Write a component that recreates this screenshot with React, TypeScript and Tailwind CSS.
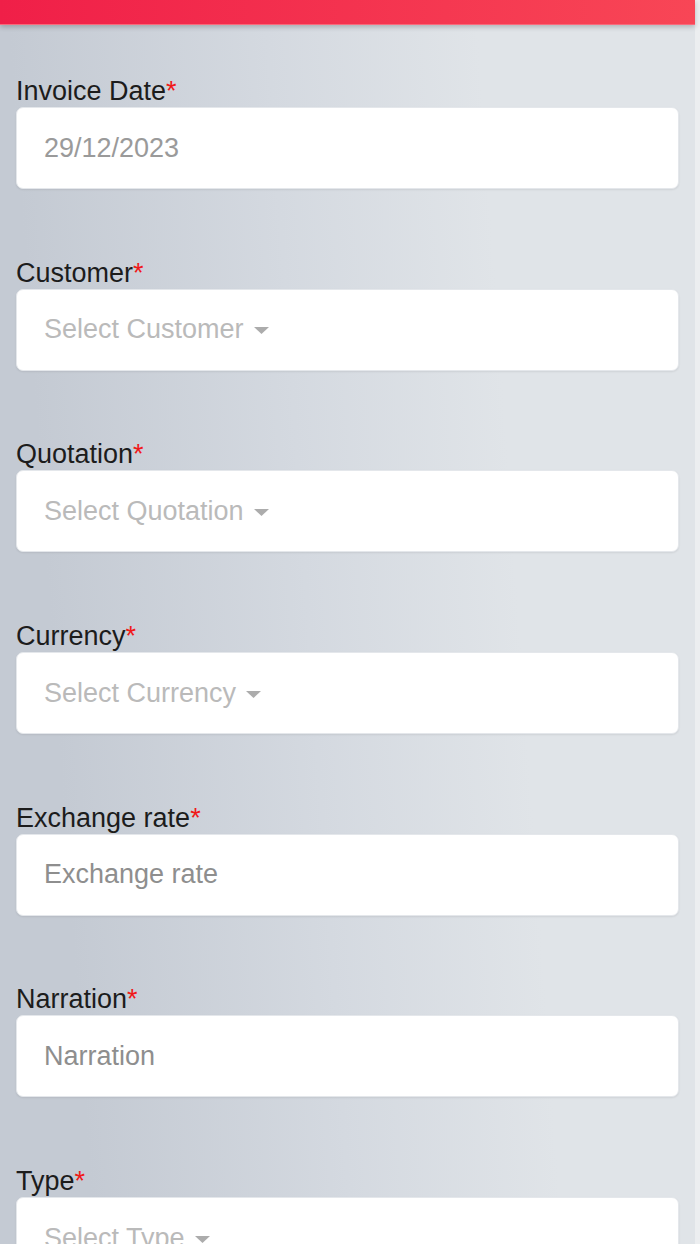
import React from "react";

type Field = { label: string; value: string; kind: "date" | "select" | "text" };

const fields: Field[] = [
  { label: "Invoice Date", value: "29/12/2023", kind: "date" },
  { label: "Customer", value: "Select Customer", kind: "select" },
  { label: "Quotation", value: "Select Quotation", kind: "select" },
  { label: "Currency", value: "Select Currency", kind: "select" },
  { label: "Exchange rate", value: "Exchange rate", kind: "text" },
  { label: "Narration", value: "Narration", kind: "text" },
  { label: "Type", value: "Select Type", kind: "select" },
];

function Caret() {
  return (
    <svg width="15" height="7" viewBox="0 0 15 7" className="ml-[10px] mt-[2px] shrink-0">
      <path d="M0 0 L15 0 L7.5 7 Z" fill="#acacac" />
    </svg>
  );
}

function FieldBlock({ f }: { f: Field }) {
  const color =
    f.kind === "select" ? "text-[#bababa]" : f.kind === "date" ? "text-[#9a9a9a]" : "text-[#8e8e8e]";
  return (
    <div className="flex flex-col">
      <div className="h-[31px] text-[27px] leading-[31px] text-[#1c1c1c]">
        {f.label}
        <span className="text-[#f01818]">*</span>
      </div>
      <div className="flex h-[82px] items-center rounded-[7px] border border-[#e4e7eb] bg-white pl-[27px] shadow-[0_1px_2px_rgba(0,0,0,0.08)]">
        <span className={`text-[27px] leading-[31px] ${color}`}>{f.value}</span>
        {f.kind === "select" && <Caret />}
      </div>
    </div>
  );
}

export default function App() {
  return (
    <div
      className="flex h-[1244px] w-[700px] overflow-hidden"
      style={{ fontFamily: '"Liberation Sans", Arial, sans-serif' }}
    >
      <div className="flex-1 bg-[linear-gradient(86deg,#c4cad3_12%,#d4d9e0_45%,#e0e4e8_72%)]">
        <div className="relative h-[25px] bg-[linear-gradient(90deg,#f01f48,#f84656)] shadow-[0_2px_5px_rgba(0,0,0,0.22)]">
          <div className="absolute bottom-0 left-0 right-0 h-[1px] bg-[#f86a7c]" />
        </div>
        <div className="flex flex-col gap-[68.7px] px-4 pt-[51px]">
          {fields.map((f) => (
            <FieldBlock key={f.label} f={f} />
          ))}
        </div>
      </div>
      <div className="w-[5px] bg-[#eceef0]" />
    </div>
  );
}
